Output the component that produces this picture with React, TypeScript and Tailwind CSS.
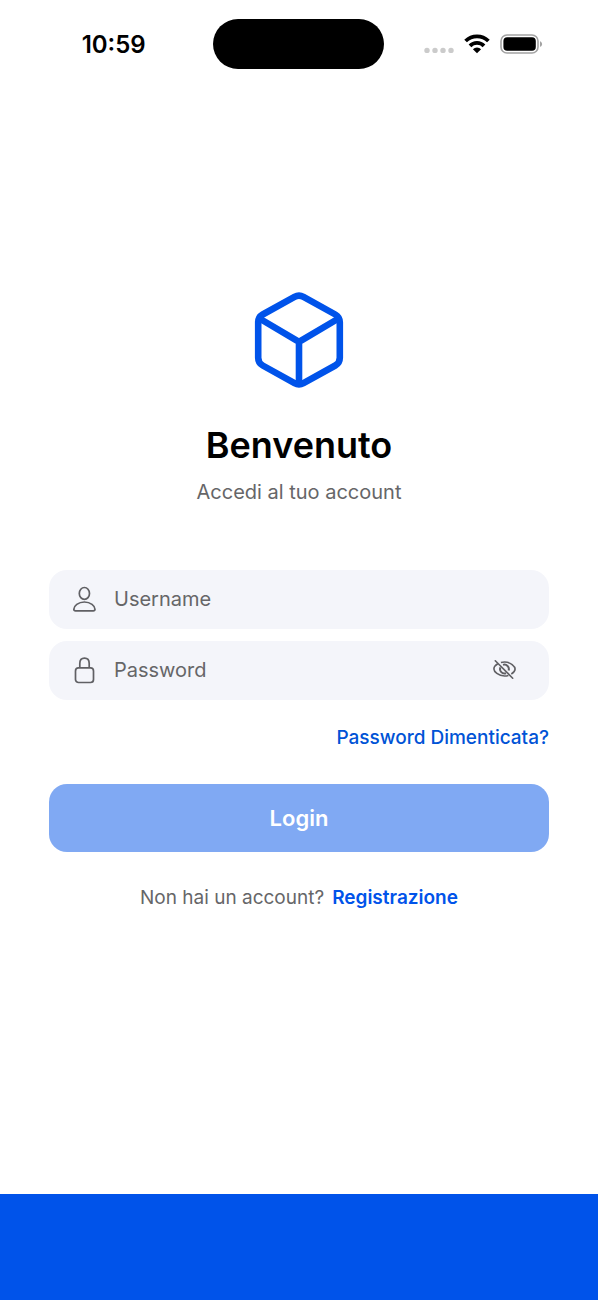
import { useState, type ReactNode } from "react";

interface FieldProps {
  id: string;
  label: string;
  type: string;
  value: string;
  onChange: (value: string) => void;
  icon: ReactNode;
  action?: ReactNode;
}

function StatusBar() {
  return (
    <header className="grid grid-cols-3 items-center pt-[19px]">
      <time className="pl-7 pt-0.5 text-center text-2xl font-semibold leading-none">10:59</time>
      <div className="mx-auto h-[50px] w-[171px] rounded-full bg-black" />
      <div className="flex items-center justify-center gap-[10px] pr-[30px]">
        <svg width="30" height="20" viewBox="0 0 30 20" fill="#cbcbcb" aria-hidden="true">
          <circle cx="3" cy="16.4" r="2.7" />
          <circle cx="11" cy="16.4" r="2.7" />
          <circle cx="19" cy="16.4" r="2.7" />
          <circle cx="27" cy="16.4" r="2.7" />
        </svg>
        <svg width="26" height="20" viewBox="0 0 26 20" fill="none" stroke="#000" strokeWidth="3.8" aria-hidden="true">
          <path d="M1.6 7a16.2 16.2 0 0 1 22.8 0" />
          <path d="M6 11.9a9.8 9.8 0 0 1 14 0" />
          <path d="M13 19.2 8.9 15.2a5.8 5.8 0 0 1 8.2 0Z" fill="#000" stroke="none" />
        </svg>
        <svg width="43" height="20" viewBox="0 0 43 20" aria-hidden="true">
          <rect x="1" y="1" width="37" height="18" rx="6" fill="none" stroke="#a3a3a3" strokeWidth="1.6" />
          <rect x="3.4" y="3.3" width="32.4" height="13.4" rx="3.8" fill="#000" />
          <path d="M40 7.2c2.8.9 2.8 4.7 0 5.6Z" fill="#a3a3a3" />
        </svg>
      </div>
    </header>
  );
}

function CubeLogo() {
  return (
    <svg
      className="mx-auto"
      width="96"
      height="96"
      viewBox="0 0 96 96"
      fill="none"
      stroke="#0053ea"
      strokeWidth="6.6"
      strokeLinejoin="round"
      aria-hidden="true"
    >
      <path d="M88.8 30.3a9 9 0 0 0-4.5-7.8L52.5 4.9a9 9 0 0 0-9 0L11.7 22.5a9 9 0 0 0-4.5 7.8v35.4a9 9 0 0 0 4.5 7.8l31.8 17.6a9 9 0 0 0 9 0l31.8-17.6a9 9 0 0 0 4.5-7.8Z" />
      <path d="M8.5 26.5 48 49.8l39.5-23.3M48 92V49.8" />
    </svg>
  );
}

function UserIcon() {
  return (
    <svg width="24" height="28" viewBox="0 0 24 28" fill="none" stroke="#606064" strokeWidth="1.7" aria-hidden="true">
      <ellipse cx="12.4" cy="8.4" rx="5.1" ry="5.9" />
      <path d="M12.4 17c-6.2 0-10.6 4-10.6 7.3 0 1.1.6 1.6 1.800 1.600h17.6c1.2 0 1.800-.5 1.800-1.600 0-3.300-4.400-7.300-10.600-7.300Z" />
    </svg>
  );
}

function LockIcon() {
  return (
    <svg width="24" height="28" viewBox="0 0 24 28" fill="none" stroke="#606064" strokeWidth="1.7" aria-hidden="true">
      <rect x="3.5" y="11.9" width="18" height="14.6" rx="3" />
      <path d="M7.8 11.9V7.4c0-3.2 2-5.2 4.7-5.2s4.7 2 4.7 5.2v4.5" />
    </svg>
  );
}

function EyeOffIcon() {
  return (
    <svg width="24" height="20" viewBox="0 0 24 20" fill="none" stroke="#606064" strokeWidth="1.6" aria-hidden="true">
      <path d="M4.8 3.8C2.2 5.3.9 7.5.9 9c0 2.5 4.4 7 10.6 7 1.4 0 2.7-.2 3.9-.6" />
      <path d="M7.9 2.5c1.1-.3 2.3-.5 3.6-.5 6.2 0 10.6 4.5 10.6 7 0 1.4-1.3 3.5-3.8 5" />
      <path d="M7.4 7.4a4.4 4.4 0 0 0 5.6 5.800M10 4.900a4.400 4.400 0 0 1 5.600 5.600" strokeWidth="2" />
      <path d="m2.3.8 17.4 17.4" strokeLinecap="round" />
    </svg>
  );
}

function Field({ id, label, type, value, onChange, icon, action }: FieldProps) {
  return (
    <div className="flex h-[59px] items-center rounded-[18px] bg-[#f4f5fa] pl-[23px] pr-8">
      <label htmlFor={id} aria-label={label}>
        {icon}
      </label>
      <input
        id={id}
        type={type}
        placeholder={label}
        value={value}
        onChange={(e) => onChange(e.target.value)}
        className="ml-[18px] min-w-0 flex-1 bg-transparent text-xl text-black outline-none placeholder:text-[#666668]"
      />
      {action}
    </div>
  );
}

export default function App() {
  const [username, setUsername] = useState("");
  const [password, setPassword] = useState("");
  const [visible, setVisible] = useState(false);

  return (
    <div className="flex min-h-screen flex-col bg-white font-['Inter','Liberation_Sans',sans-serif] text-black">
      <StatusBar />

      <main className="flex flex-1 flex-col justify-center px-[49px] pb-[60px]">
        <CubeLogo />
        <h1 className="mt-[33px] text-center text-4xl font-semibold leading-[48px]">Benvenuto</h1>
        <p className="mt-[7px] text-center text-xl leading-[32px] text-[#666668]">Accedi al tuo account</p>

        <form className="mt-[62px] flex flex-col" onSubmit={(e) => e.preventDefault()}>
          <div className="flex flex-col gap-3">
            <Field
              id="username"
              label="Username"
              type="text"
              value={username}
              onChange={setUsername}
              icon={<UserIcon />}
            />
            <Field
              id="password"
              label="Password"
              type={visible ? "text" : "password"}
              value={password}
              onChange={setPassword}
              icon={<LockIcon />}
              action={
                <button type="button" aria-label="Mostra password" onClick={() => setVisible(!visible)}>
                  <EyeOffIcon />
                </button>
              }
            />
          </div>
          <a href="#" className="mt-6 self-end text-[19px] font-medium leading-[28px] text-[#0053d6]">
            Password Dimenticata?
          </a>
          <button
            type="submit"
            className="mt-8 h-[68px] rounded-[18px] bg-[#80a9f3] pt-0.5 text-[22px] font-semibold text-white"
          >
            Login
          </button>
        </form>

        <p className="mt-8 flex justify-center gap-2 text-[19px] leading-[28px] text-[#666668]">
          Non hai un account?
          <a href="#" className="font-semibold text-[#0053ea]">
            Registrazione
          </a>
        </p>
      </main>

      <footer className="h-[106px] bg-[#0053ea]" />
    </div>
  );
}
